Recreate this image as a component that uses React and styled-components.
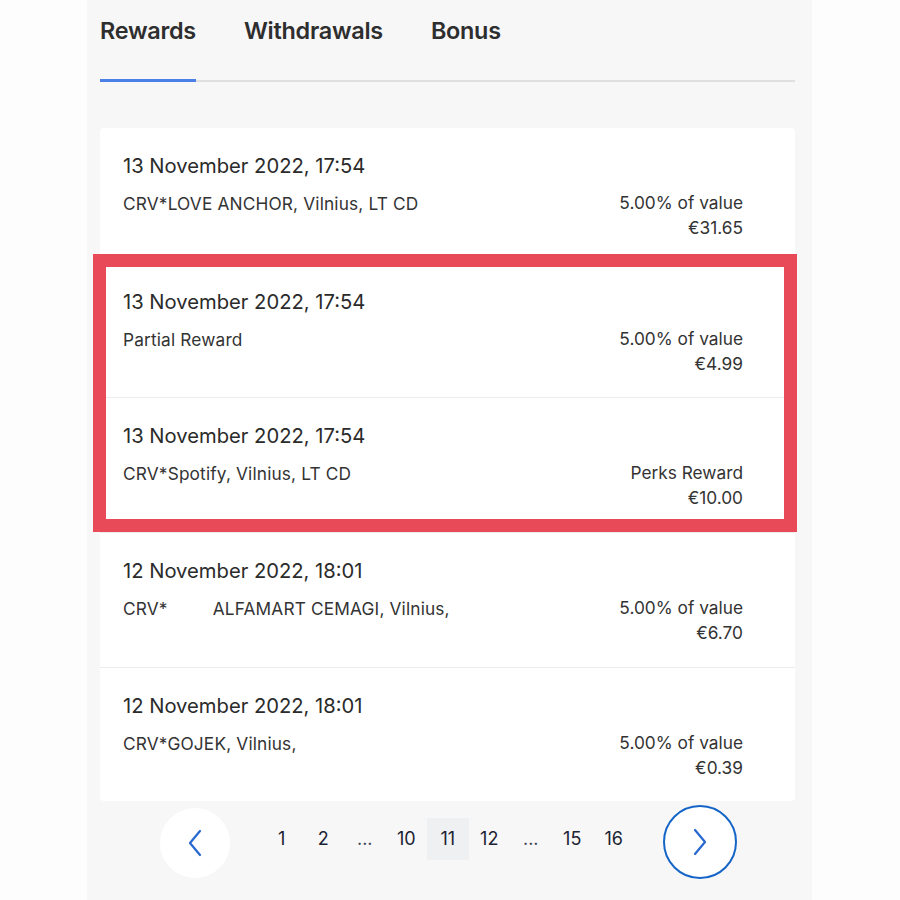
import styled, { createGlobalStyle } from "styled-components";

const GlobalStyle = createGlobalStyle`
  html, body {
    margin: 0;
    padding: 0;
    background: #fdfdfd;
    font-family: Inter, "Noto Sans", sans-serif;
  }
`;

const Page = styled.div`
  width: 900px;
  height: 900px;
  display: flex;
  overflow: hidden;
`;

const Panel = styled.div`
  margin-left: 87px;
  width: 725px;
  height: 100%;
  background: #f7f7f7;
  padding: 0 17px 0 13px;
  box-sizing: border-box;
  display: flex;
  flex-direction: column;
`;

// Tabs
const TabBar = styled.div`
  display: flex;
  gap: 48px;
  border-bottom: 2px solid #e0e0e0;
  height: 82px;
  box-sizing: border-box;
`;

const Tab = styled.div`
  position: relative;
  font-size: 23.4px;
  font-weight: 600;
  color: #2e2e2e;
  padding-top: 16px;
  letter-spacing: -0.25px;

  &::after {
    content: "";
    display: ${(p) => (p.active ? "block" : "none")};
    position: absolute;
    left: 0;
    right: 0;
    bottom: -2px;
    height: 3px;
    background: #4a7fe6;
  }
`;

// Card | rows
const Card = styled.div`
  margin-top: 46px;
  background: #fff;
  border-radius: 4px;
`;

const Row = styled.div`
  height: 134.7px;
  box-sizing: border-box;
  padding: 25px 52px 0 23px;
  border-top: ${(p) => (p.first ? "none" : "1px solid #ececec")};
  display: flex;
  flex-direction: column;
`;

const DateLine = styled.div`
  font-size: 20.2px;
  color: #2b2b2b;
  line-height: 26px;
`;

const Details = styled.div`
  display: flex;
  justify-content: space-between;
  margin-top: 12px;
  font-size: 17.3px;
  color: #333;
  line-height: 25px;
`;

const Desc = styled.div`
  white-space: pre;
  letter-spacing: 0.15px;
`;

const Values = styled.div`
  text-align: right;
  margin-top: -1px;
`;

const Highlight = styled.div`
  position: relative;

  &::after {
    content: "";
    position: absolute;
    top: -9px;
    left: -7px;
    right: -2px;
    bottom: 0;
    border: 13px solid #e84a57;
    pointer-events: none;
  }
`;

// Pagination
const Pager = styled.div`
  display: flex;
  align-items: center;
  height: 80px;
  padding-left: 60px;
  margin-top: 2px;
`;

const RoundButton = styled.div`
  width: 70px;
  height: 70px;
  border-radius: 50%;
  background: #fff;
  border: ${(p) => (p.outlined ? "2.5px solid #1565c8" : "none")};
  box-sizing: ${(p) => (p.outlined ? "content-box" : "border-box")};
  margin-top: ${(p) => (p.outlined ? "-3px" : "0")};
  display: flex;
  align-items: center;
  justify-content: center;
  flex-shrink: 0;
`;

const Pages = styled.div`
  display: flex;
  align-items: center;
  margin: -9px 28px 0 31px;
`;

const PageNum = styled.div`
  width: 41.5px;
  height: 42px;
  display: flex;
  align-items: center;
  justify-content: center;
  font-size: 18px;
  color: ${(p) => (p.dots ? "#3a4150" : "#1c2333")};
  background: ${(p) => (p.current ? "#eef0f2" : "transparent")};
`;

const Chevron = ({ dir }) => (
  <svg width="16" height="28" viewBox="0 0 16 28" fill="none">
    <polyline
      points={dir === "left" ? "13,2 3,14 13,26" : "3,2 13,14 3,26"}
      stroke="#2668d0"
      strokeWidth="2.2"
      strokeLinecap="round"
      strokeLinejoin="round"
    />
  </svg>
);

const Entry = ({ date, desc, label, amount, first }) => (
  <Row first={first}>
    <DateLine>{date}</DateLine>
    <Details>
      <Desc>{desc}</Desc>
      <Values>
        <div>{label}</div>
        <div>{amount}</div>
      </Values>
    </Details>
  </Row>
);

const pages = ["1", "2", "...", "10", "11", "12", "...", "15", "16"];

export default function App() {
  return (
    <Page>
      <GlobalStyle />
      <Panel>
        <TabBar>
          <Tab active>Rewards</Tab>
          <Tab>Withdrawals</Tab>
          <Tab>Bonus</Tab>
        </TabBar>

        <Card>
          <Entry
            first
            date="13 November 2022, 17:54"
            desc="CRV*LOVE ANCHOR, Vilnius, LT CD"
            label="5.00% of value"
            amount="€31.65"
          />
          <Highlight>
            <Entry
              date="13 November 2022, 17:54"
              desc="Partial Reward"
              label="5.00% of value"
              amount="€4.99"
            />
            <Entry
              date="13 November 2022, 17:54"
              desc="CRV*Spotify, Vilnius, LT CD"
              label="Perks Reward"
              amount="€10.00"
            />
          </Highlight>
          <Entry
            date="12 November 2022, 18:01"
            desc={"CRV*         ALFAMART CEMAGI, Vilnius,"}
            label="5.00% of value"
            amount="€6.70"
          />
          <Entry
            date="12 November 2022, 18:01"
            desc="CRV*GOJEK, Vilnius,"
            label="5.00% of value"
            amount="€0.39"
          />
        </Card>

        <Pager>
          <RoundButton>
            <Chevron dir="left" />
          </RoundButton>
          <Pages>
            {pages.map((p, i) => (
              <PageNum key={i} current={p === "11"} dots={p === "..."}>
                {p}
              </PageNum>
            ))}
          </Pages>
          <RoundButton outlined>
            <Chevron dir="right" />
          </RoundButton>
        </Pager>
      </Panel>
    </Page>
  );
}
